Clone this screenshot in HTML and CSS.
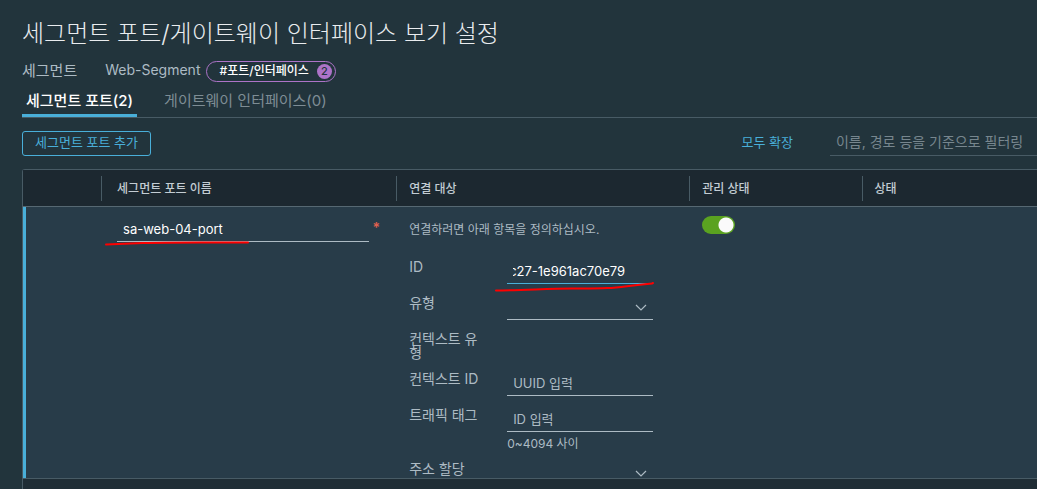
FILE: index.html
```html
<!DOCTYPE html>
<html lang="ko">
<head>
  <meta charset="UTF-8" />
  <meta name="viewport" content="width=device-width, initial-scale=1" />
  <title>세그먼트 포트/게이트웨이 인터페이스 보기 설정</title>
  <link rel="stylesheet" href="styles.css">
</head>
<body>
  <header class="page-header">
    <h1>세그먼트 포트/게이트웨이 인터페이스 보기 설정</h1>
    <div class="segment-info">
      <span class="segment-label">세그먼트</span>
      <span class="segment-name">Web-Segment</span>
      <span class="tag">#포트/인터페이스 <span class="tag-count">2</span></span>
    </div>
  </header>

  <nav class="tabs">
    <a href="#ports" class="tab active" aria-current="page">세그먼트 포트(2)</a>
    <a href="#gateways" class="tab">게이트웨이 인터페이스(0)</a>
  </nav>

  <main id="ports">
    <div class="toolbar">
      <button type="button" class="add-btn">세그먼트 포트 추가</button>
      <button type="button" class="link-btn">모두 확장</button>
      <input type="text" class="filter" aria-label="필터" placeholder="이름, 경로 등을 기준으로 필터링" />
    </div>

    <div class="grid">
      <div class="grid-scroll">
        <table>
          <colgroup>
            <col class="col-actions"><col class="col-name"><col class="col-target"><col class="col-admin"><col>
          </colgroup>
          <thead>
            <tr>
              <th></th>
              <th class="name-cell"><span>세그먼트 포트 이름</span></th>
              <th><span>연결 대상</span></th>
              <th><span>관리 상태</span></th>
              <th><span>상태</span></th>
            </tr>
          </thead>
          <tbody>
            <tr>
              <td class="edit-marker"></td>
              <td class="name-cell">
                <div class="name-field">
                  <input type="text" class="field" aria-label="세그먼트 포트 이름" value="sa-web-04-port" required />
                  <span class="required">*</span>
                  <svg class="mark mark-name" viewBox="0 0 146 6" aria-hidden="true"><path d="M1 4.5C14 4 26 3.5 38 3C66 2 110 2.5 143 2.5" /></svg>
                </div>
              </td>
              <td>
                <p class="hint">연결하려면 아래 항목을 정의하십시오.</p>
                <div class="form">
                  <label class="form-label" for="port-id">ID</label>
                  <div class="control">
                    <input type="text" id="port-id" class="field focused" value="c27-1e961ac70e79" />
                    <svg class="mark mark-id" viewBox="0 0 162 12" aria-hidden="true"><path d="M2 9.5C30 9.5 52 7.5 78 7.5C128 8 122 5.5 158 2.5L159 2" /></svg>
                  </div>

                  <label class="form-label" for="port-type">유형</label>
                  <select id="port-type" class="field"><option></option></select>

                  <span class="form-label">컨텍스트 유형</span>
                  <span></span>

                  <label class="form-label" for="context-id">컨텍스트 ID</label>
                  <input type="text" id="context-id" class="field" placeholder="UUID 입력" />

                  <label class="form-label" for="traffic-tag">트래픽 태그</label>
                  <div>
                    <input type="text" id="traffic-tag" class="field" placeholder="ID 입력" />
                    <small>0~4094 사이</small>
                  </div>

                  <label class="form-label" for="address">주소 할당</label>
                  <select id="address" class="field"><option></option></select>
                </div>
              </td>
              <td><input type="checkbox" class="toggle" aria-label="관리 상태" checked /></td>
              <td></td>
            </tr>
          </tbody>
        </table>
      </div>
    </div>
  </main>
</body>
</html>
```
FILE: styles.css
```css
* {
  box-sizing: border-box;
}
body {
  margin: 0;
  padding: 16px 0 0 22px;
  height: 100vh;
  overflow: hidden;
  display: flex;
  flex-direction: column;
  background-color: #22343c;
  color: #adbbc4;
  font-family: Inter, "Noto Sans CJK KR", sans-serif;
  font-size: 13px;
}
button, input, select {
  font: inherit;
  color: inherit;
}
h1 {
  margin: 0;
  font-size: 24px;
  font-weight: 300;
  line-height: 36px;
  color: #e9ecef;
}
.segment-info {
  display: flex;
  align-items: center;
  height: 22px;
  margin-top: 8px;
  font-size: 14px;
  line-height: 20px;
}
.segment-label {
  margin-right: 28px;
  font-size: 15px;
}
.segment-name {
  padding-bottom: 2px;
}
.tag {
  display: flex;
  align-items: center;
  gap: 8px;
  height: 21px;
  margin-left: 6px;
  padding: 0 3px 0 12px;
  border: 1px solid #ad73c8;
  border-radius: 11px;
  color: #fff;
  font-size: 12px;
  font-weight: 500;
}
.tag-count {
  width: 15px;
  height: 15px;
  border-radius: 50%;
  background-color: #ad73c8;
  color: #22343c;
  font-size: 11px;
  line-height: 15px;
  text-align: center;
}
.tabs {
  display: flex;
  gap: 23px;
  height: 36px;
  border-bottom: 1px solid #485b65;
}
.tab {
  height: 35px;
  padding: 0 4px;
  font-size: 15px;
  line-height: 38px;
  color: #7e8d95;
  text-decoration: none;
}
.tab.active {
  color: #fff;
  font-weight: 500;
  box-shadow: inset 0 -3px #49afd9;
}
main {
  flex: 1;
  min-height: 0;
  display: flex;
  flex-direction: column;
}
.toolbar {
  display: flex;
  align-items: center;
  padding: 13px 0;
}
.add-btn {
  height: 25px;
  padding: 0 12px 3px;
  background: none;
  border: 1px solid #49afd9;
  border-radius: 3px;
  color: #49afd9;
  font-size: 13px;
  line-height: 20px;
}
.link-btn {
  height: 25px;
  margin-left: auto;
  margin-right: 37px;
  padding: 0 0 4px;
  background: none;
  border: 0;
  color: #49afd9;
  font-size: 13px;
  line-height: 20px;
}
.filter {
  width: 20.4%;
  height: 25px;
  padding: 0 6px 4px;
  background: none;
  border: 0;
  border-bottom: 1px solid #485b65;
  font-size: 14px;
}
.filter::placeholder {
  color: #77868e;
}
.grid {
  flex: 1;
  min-height: 0;
  display: flex;
  padding-bottom: 10px;
  background-color: #1f2d35;
  border: solid #485b65;
  border-width: 1px 0 0 1px;
  border-top-left-radius: 3px;
}
.grid-scroll {
  flex: 1;
  overflow: hidden;
  background-color: #283c49;
  border-bottom: 1px solid #485b65;
}
table {
  width: 100%;
  table-layout: fixed;
  border-collapse: separate;
  border-spacing: 0;
}
.col-actions {
  width: 7.7%;
}
.col-name {
  width: 29.1%;
}
.col-target {
  width: 28.9%;
}
.col-admin {
  width: 17%;
}
th {
  height: 37px;
  padding: 0;
  background-color: #1c2830;
  border-bottom: 1px solid #566872;
  color: #c3cdd4;
  font-size: 12px;
  font-weight: 500;
  text-align: left;
}
th span {
  display: block;
  padding-left: 12px;
  border-left: 1px solid #485b65;
  line-height: 25px;
}
th.name-cell span {
  padding-left: 15px;
}
td {
  padding: 9px 0 0 13px;
  vertical-align: top;
}
td.name-cell {
  padding: 11px 16px 0 16px;
}
.edit-marker {
  border-left: 3px solid #49afd9;
}
.field {
  display: block;
  width: 100%;
  height: 24px;
  padding: 0 6px 2px;
  background: none;
  border: 0;
  border-bottom: 1px solid #adbbc4;
  border-radius: 0;
  outline: none;
}
input.field {
  color: #fff;
}
.field::placeholder {
  color: #adbbc4;
}
.field.focused {
  border-color: #49afd9;
  text-indent: -4px;
}
select.field {
  appearance: none;
  background: url("data:image/svg+xml,%3Csvg xmlns='http://www.w3.org/2000/svg' width='12' height='8' fill='none' stroke='%23adbbc4' stroke-width='1.2'%3E%3Cpath d='M1 1l5 5 5-5'/%3E%3C/svg%3E") no-repeat right 6px center;
}
.name-field {
  position: relative;
  display: flex;
  gap: 4px;
}
.required {
  color: #e0604f;
  font-size: 14px;
  font-weight: 600;
  line-height: 20px;
}
.mark {
  position: absolute;
  fill: none;
  stroke: #fe0000;
  stroke-width: 2;
  stroke-linecap: round;
  pointer-events: none;
}
.mark-name {
  left: -12px;
  bottom: -4px;
  width: 146px;
}
.mark-id {
  left: -13px;
  bottom: -9px;
  width: 162px;
}
.hint {
  margin: 0 0 16px;
  font-size: 12px;
  line-height: 28px;
}
.form {
  display: grid;
  grid-template-columns: 72px 146px;
  gap: 12px 26px;
  line-height: 14px;
}
.form-label {
  font-size: 14px;
}
.control {
  position: relative;
}
small {
  display: block;
  padding-top: 5px;
  font-size: 12px;
  line-height: 13px;
}
.toggle {
  appearance: none;
  display: block;
  width: 33px;
  height: 18px;
  margin: 0;
  border-radius: 9px;
  background: radial-gradient(circle at 24px 9px, #fafafa 7px, #5aa220 8px);
}
```
